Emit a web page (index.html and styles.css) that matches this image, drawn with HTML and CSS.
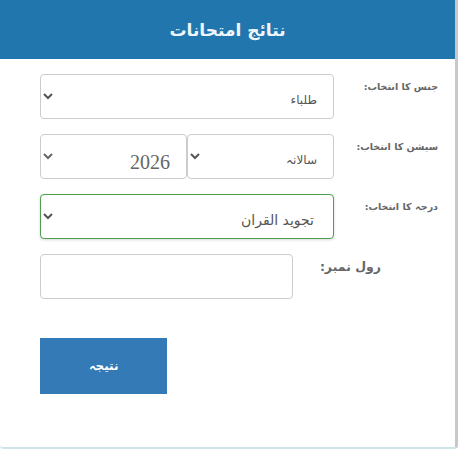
FILE: index.html
```html
<!DOCTYPE html>
<html lang="ur" dir="rtl">
<head>
    <meta charset="UTF-8">
    <title>نتائج امتحانات</title>
    <link rel="stylesheet" href="styles.css">
</head>
<body>

<div class="panel">
    <header class="panel-head">
        <h1>نتائج امتحانات</h1>
    </header>

    <form class="panel-body">
        <div class="row">
            <label class="row-label">جنس کا انتخاب:</label>
            <div class="row-fields">
                <select class="field">
                    <option>طلباء</option>
                </select>
            </div>
        </div>

        <div class="row">
            <label class="row-label">سیشن کا انتخاب:</label>
            <div class="row-fields">
                <select class="field">
                    <option>سالانہ</option>
                </select>
                <select class="field field-num">
                    <option>2026</option>
                </select>
            </div>
        </div>

        <div class="row">
            <label class="row-label">درجہ کا انتخاب:</label>
            <div class="row-fields">
                <select class="field field-valid">
                    <option>تجوید القران</option>
                </select>
            </div>
        </div>

        <div class="row row-roll">
            <label class="row-label">رول نمبر:</label>
            <div class="row-fields">
                <input class="field" type="text">
            </div>
        </div>

        <button class="submit" type="button">نتیجہ</button>
    </form>
</div>

</body>
</html>
```

FILE: styles.css
```css
/* General styles */
html, body {
    height: 100%;
}

body {
    margin: 0;
    background-color: #fff;
    color: #555;
    font-family: 'DejaVu Sans', sans-serif;
}

.panel {
    box-sizing: border-box;
    height: 449px;
    border-right: 3px solid #c4cacc;
    border-bottom: 2px solid #cfe3ea;
    border-radius: 0 0 4px 4px;
}

.panel-head {
    height: 59px;
    display: flex;
    align-items: center;
    justify-content: center;
    background-color: #2176ae;
}

.panel-head h1 {
    margin: 0;
    color: #eef6fb;
    font-size: 17px;
    font-weight: bold;
}

.panel-body {
    display: flex;
    flex-direction: column;
    padding: 15px 0 0 40px;
}

/* form rows, first child sits on the right because of rtl */
.row {
    display: flex;
    justify-content: space-between;
    margin-bottom: 15px;
}

.row-label {
    width: 94px;
    margin-right: 17px;
    padding-top: 7px;
    color: #666;
    font-size: 9.5px;
    font-weight: bold;
    text-align: right;
    white-space: nowrap;
}

.row-fields {
    display: flex;
    width: 294px;
}

.field {
    flex: 1;
    min-width: 0;
    height: 45px;
    box-sizing: border-box;
    padding: 10px 12px 4px;
    background-color: #fff;
    border: 1px solid #ccc;
    border-radius: 4px;
    color: #555;
    font-family: 'DejaVu Sans', sans-serif;
    font-size: 12px;
}

.field-num {
    padding-top: 14px;
    color: #666;
    font-family: 'Liberation Serif', serif;
    font-size: 20px;
}

.field-valid {
    padding-right: 15px;
    border-color: #4c9f4c;
    box-shadow: 0 1px 3px rgba(0, 0, 0, 0.15);
    font-size: 14px;
}

.row-roll {
    margin-bottom: 39px;
}

.row-roll .row-label {
    width: 60px;
    margin-right: 74px;
    padding-top: 5px;
    font-size: 12.5px;
}

.row-roll .row-fields {
    width: 253px;
}

.submit {
    align-self: flex-end;
    width: 127px;
    height: 56px;
    background-color: #337ab7;
    border: 0;
    color: #fff;
    font-family: 'DejaVu Sans', sans-serif;
    font-size: 12px;
    font-weight: bold;
}
```
